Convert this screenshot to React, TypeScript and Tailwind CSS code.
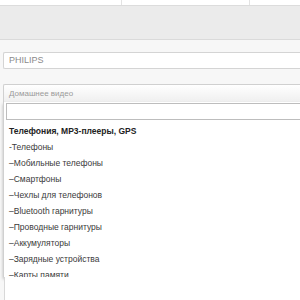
export default function App() {
  const items = [
    "-Телефоны",
    "–Мобильные телефоны",
    "–Смартфоны",
    "–Чехлы для телефонов",
    "–Bluetooth гарнитуры",
    "–Проводные гарнитуры",
    "–Аккумуляторы",
    "–Зарядные устройства",
    "–Карты памяти",
  ];
  return (
    <div className="w-[300px] h-[300px] overflow-hidden bg-[#f7f7f7] relative" style={{ fontFamily: '"Liberation Sans", Arial, sans-serif' }}>
      <div className="h-[6px] bg-white border-b border-[#dcdcdc] flex">
        <div className="w-[122px] border-r border-[#e3e3e3]" />
        <div className="w-[128px] border-r border-[#e3e3e3]" />
      </div>
      <div className="h-[34px] bg-[#ebebeb] border-b border-[#dadada]" />
      <div className="pl-[3px] pt-[12px]">
        <div className="h-[17px] bg-white border border-[#d4d4d4] border-r-0 rounded-l-[2px] flex items-center pl-[5px] text-[9px] text-[#8a8a8a]">
          PHILIPS
        </div>
        <div className="mt-[15px] h-[18px] border border-[#d0d0d0] border-r-0 border-b-0 rounded-tl-[2px] bg-gradient-to-b from-[#ffffff] to-[#efefef] flex items-center pl-[5px] text-[8px] text-[#9a9a9a]">
          Домашнее видео
        </div>
        <div className="bg-white border-l border-[#d0d0d0] shadow-[0_2px_3px_rgba(0,0,0,0.25)] h-[175px] overflow-hidden">
          <div className="pl-[2px] pt-[1px]">
            <div className="h-[17px] border border-[#bdbdbd] border-r-0 bg-white" />
          </div>
          <div className="pl-[5px] pt-[3px] text-[8.5px] text-[#3a3a3a]">
            <div className="h-[16px] leading-[16px] font-bold text-[#222]">Телефония, MP3-плееры, GPS</div>
            {items.map((t) => (
              <div key={t} className="h-[16px] leading-[16px]">{t}</div>
            ))}
          </div>
        </div>
        <div className="h-[30px] bg-white border-l border-[#d8d8d8] ml-[1px]" />
      </div>
    </div>
  );
}
